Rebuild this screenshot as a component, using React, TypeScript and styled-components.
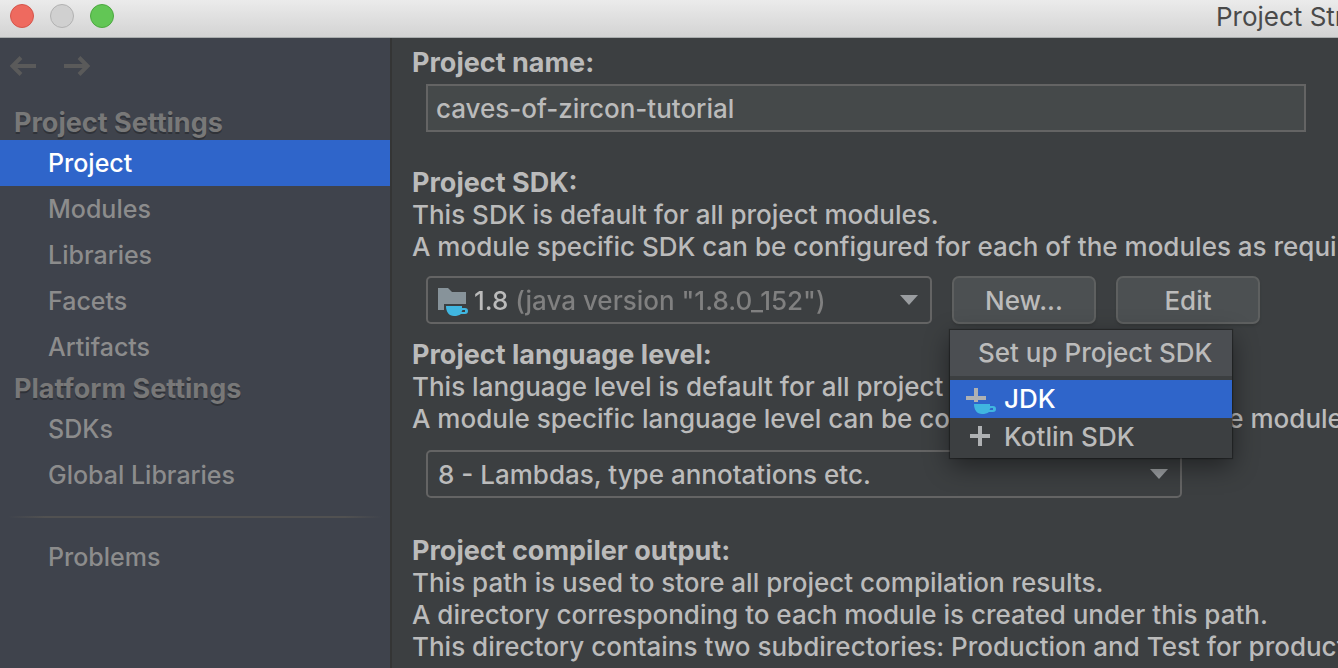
import React from "react";
import styled, { createGlobalStyle, css } from "styled-components";

const GlobalStyle = createGlobalStyle`
  * { box-sizing: border-box; }
  body {
    margin: 0;
    background: #3c3f41;
    color: #bbbbbb;
    font-family: Inter, Roboto, sans-serif;
    font-size: 26px;
    font-weight: 450;
    line-height: 32px;
  }
  button, input, select { font: inherit; color: inherit; }
`;

const Window = styled.div`
  display: flex;
  flex-direction: column;
  height: 100vh;
  overflow: hidden;
`;

const TitleBar = styled.header`
  display: flex;
  flex: none;
  align-items: center;
  gap: 16px;
  height: 38px;
  padding: 0 0 5px 10px;
  background: linear-gradient(#ebebeb, #d3d3d3);
  border-bottom: 1px solid #a9adad;
`;

const Light = styled.button<{ $fill: string; $edge: string }>`
  width: 24px;
  height: 24px;
  padding: 0;
  border: 1px solid ${(p) => p.$edge};
  border-radius: 50%;
  background: ${(p) => p.$fill};
`;

const Title = styled.h1`
  flex: none;
  width: 122px;
  margin: 0 0 0 auto;
  padding-top: 2px;
  overflow: hidden;
  color: #4a4a4a;
  font-size: 26px;
  font-weight: 400;
  white-space: nowrap;
`;

const Body = styled.div`
  display: flex;
  flex: 1;
  min-height: 0;
`;

const Sidebar = styled.nav`
  flex: none;
  width: 392px;
  padding-top: 12px;
  background: #3f434c;
  border-right: 2px solid #343535;
`;

const History = styled.div`
  display: flex;
  gap: 22px;
  padding: 0 8px;
  height: 54px;
`;

const HistoryButton = styled.button`
  width: 32px;
  height: 32px;
  padding: 0;
  border: 0;
  background: none;
  color: #5a5a5a;
  svg { display: block; }
`;

const GroupTitle = styled.h2`
  margin: 0;
  padding: 3px 14px 1px;
  color: #787878;
  font-size: 27px;
  font-weight: 700;
  text-shadow: 0 2px 0 #2f3238;
`;

const NavLink = styled.a<{ $active?: boolean }>`
  display: block;
  padding: 7px 48px;
  color: #8c8c8c;
  font-size: 25px;
  text-decoration: none;
  ${(p) => p.$active && css`
    background: #2f65ca;
    color: #ffffff;
  `}
`;

const Divider = styled.hr`
  height: 2px;
  margin: 18px 8px 16px;
  border: 0;
  background: linear-gradient(90deg, transparent, #515151 10%, #515151 90%, transparent);
`;

const Content = styled.main`
  flex: 1;
  min-width: 0;
  padding: 9px 0 0 20px;
  overflow: hidden;
  white-space: nowrap;
`;

const captionText = css`
  display: block;
  margin: 0;
  font-size: 27px;
  font-weight: 700;
`;

const Caption = styled.label`
  ${captionText}
`;

const SectionTitle = styled.h2`
  ${captionText}
`;

const Hint = styled.p`
  margin: 0;
`;

const NameInput = styled.input`
  display: block;
  width: calc(100% - 46px);
  height: 48px;
  margin: 5px 32px 35px 14px;
  padding: 0 8px;
  border: 2px solid #646464;
  background: #45494a;
  outline: none;
`;

const ControlRow = styled.div<{ $last?: boolean }>`
  display: flex;
  gap: 20px;
  margin: ${(p) => (p.$last ? "15px 0 37px 14px" : "13px 0 15px 14px")};
`;

const Combo = styled.div<{ $wide?: boolean }>`
  display: flex;
  flex: none;
  align-items: center;
  gap: 4px;
  width: ${(p) => (p.$wide ? "756px" : "506px")};
  height: 48px;
  padding: 0 12px 0 10px;
  border: 2px solid #646464;
  border-radius: 5px;
`;

const ComboSelect = styled.select<{ $split?: boolean }>`
  flex: 1;
  min-width: 0;
  height: 44px;
  padding: 2px 0 0;
  border: 0;
  outline: none;
  appearance: none;
  background: none;
  ${(p) => p.$split && css`
    background: linear-gradient(90deg, #bbbbbb 40px, #808080 40px);
    background-clip: text;
    color: transparent;
  `}
`;

const PushButton = styled.button`
  width: 144px;
  height: 48px;
  padding: 2px 0 0;
  border: 2px solid #5e6060;
  border-radius: 7px;
  background: #4c5052;
  box-shadow: 0 2px 2px #36393a;
`;

const MenuAnchor = styled.div`
  position: relative;
`;

const Popup = styled.div`
  position: absolute;
  top: 54px;
  left: -2px;
  z-index: 1;
  width: 282px;
  padding-bottom: 2px;
  background: #3c3f41;
  box-shadow: 0 0 1px 1px rgba(0, 0, 0, 0.3), 0 8px 24px rgba(0, 0, 0, 0.45);
`;

const PopupTitle = styled.div`
  margin-bottom: 4px;
  padding: 7px 0 7px 28px;
  background: #4b4e52;
`;

const PopupItem = styled.button<{ $active?: boolean }>`
  display: flex;
  align-items: center;
  gap: 6px;
  width: 100%;
  height: 38px;
  padding: 0 16px;
  border: 0;
  background: ${(p) => (p.$active ? "#2f65ca" : "transparent")};
  color: ${(p) => (p.$active ? "#ffffff" : "#bbbbbb")};
`;

const BackArrow = () => (
  <svg width="32" height="32" viewBox="0 0 32 32" fill="none" stroke="currentColor" strokeWidth="4">
    <path d="M4 16H28M13 7.500L4.500 16L13 24.500" />
  </svg>
);

const ForwardArrow = () => (
  <svg width="32" height="32" viewBox="0 0 32 32" fill="none" stroke="currentColor" strokeWidth="4">
    <path d="M2 16H26M17 7.500L25.500 16L17 24.500" />
  </svg>
);

const Cup = ({ x, y }: { x: number; y: number }) => (
  <g transform={`translate(${x} ${y})`}>
    <path
      fillRule="evenodd"
      d="M0 0H16V2H19C21 2 22 3 22 5S21 8 19 8H15C13 9.500 11 10 8 10C3 10 0 6 0 0ZM16.500 4L15.500 6H19V4Z"
      fill="#40b6e0"
    />
  </g>
);

const SdkFolderIcon = () => (
  <svg width="32" height="32" viewBox="0 0 32 32">
    <path d="M0 4H10L14 8H28V20H6V26H0Z" fill="#87939a" />
    <Cup x={8} y={22} />
  </svg>
);

const AddJdkIcon = () => (
  <svg width="32" height="32" viewBox="0 0 32 32">
    <path d="M8 5H12V13H20V17H12V19H8V17H0V13H8Z" fill="#afb1b3" />
    <Cup x={8} y={21} />
  </svg>
);

const AddIcon = () => (
  <svg width="32" height="32" viewBox="0 0 32 32">
    <path d="M12 5H16V13H24V17H16V25H12V17H4V13H12Z" fill="#afb1b3" />
  </svg>
);

const Chevron = () => (
  <svg width="18" height="10" viewBox="0 0 18 10">
    <path d="M0 0H18L9 10Z" fill="#9a9da0" />
  </svg>
);

const projectItems = ["Project", "Modules", "Libraries", "Facets", "Artifacts"];
const platformItems = ["SDKs", "Global Libraries"];

export default function App() {
  return (
    <>
      <GlobalStyle />
      <Window>
        <TitleBar>
          <Light $fill="#ee6a5f" $edge="#d5554b" aria-label="Close" />
          <Light $fill="#d0d0d0" $edge="#b2b2b2" aria-label="Minimize" />
          <Light $fill="#62c655" $edge="#4ca840" aria-label="Zoom" />
          <Title>Project Structure</Title>
        </TitleBar>
        <Body>
          <Sidebar>
            <History>
              <HistoryButton aria-label="Back"><BackArrow /></HistoryButton>
              <HistoryButton aria-label="Forward"><ForwardArrow /></HistoryButton>
            </History>
            <GroupTitle>Project Settings</GroupTitle>
            {projectItems.map((item) => (
              <NavLink key={item} href="#" $active={item === "Project"}>{item}</NavLink>
            ))}
            <GroupTitle>Platform Settings</GroupTitle>
            {platformItems.map((item) => (
              <NavLink key={item} href="#">{item}</NavLink>
            ))}
            <Divider />
            <NavLink href="#">Problems</NavLink>
          </Sidebar>
          <Content>
            <section>
              <Caption htmlFor="name">Project name:</Caption>
              <NameInput id="name" defaultValue="caves-of-zircon-tutorial" />
            </section>
            <section>
              <Caption htmlFor="sdk">Project SDK:</Caption>
              <Hint>This SDK is default for all project modules.</Hint>
              <Hint>A module specific SDK can be configured for each of the modules as required.</Hint>
              <ControlRow>
                <Combo>
                  <SdkFolderIcon />
                  <ComboSelect id="sdk" $split>
                    <option>1.8 (java version "1.8.0_152")</option>
                  </ComboSelect>
                  <Chevron />
                </Combo>
                <MenuAnchor>
                  <PushButton aria-haspopup="menu" aria-expanded="true">New...</PushButton>
                  <Popup role="menu" aria-label="Set up Project SDK">
                    <PopupTitle>Set up Project SDK</PopupTitle>
                    <PopupItem role="menuitem" $active><AddJdkIcon />JDK</PopupItem>
                    <PopupItem role="menuitem"><AddIcon />Kotlin SDK</PopupItem>
                  </Popup>
                </MenuAnchor>
                <PushButton>Edit</PushButton>
              </ControlRow>
            </section>
            <section>
              <Caption htmlFor="level">Project language level:</Caption>
              <Hint>This language level is default for all project modules.</Hint>
              <Hint>A module specific language level can be configured for each of the modules as required.</Hint>
              <ControlRow $last>
                <Combo $wide>
                  <ComboSelect id="level">
                    <option>8 - Lambdas, type annotations etc.</option>
                  </ComboSelect>
                  <Chevron />
                </Combo>
              </ControlRow>
            </section>
            <section>
              <SectionTitle>Project compiler output:</SectionTitle>
              <Hint>This path is used to store all project compilation results.</Hint>
              <Hint>A directory corresponding to each module is created under this path.</Hint>
              <Hint>This directory contains two subdirectories: Production and Test for production code and test sources, respectively.</Hint>
            </section>
          </Content>
        </Body>
      </Window>
    </>
  );
}
